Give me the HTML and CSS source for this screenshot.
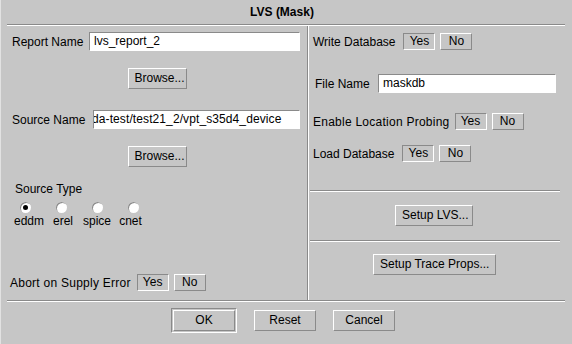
FILE: index.html
```html
<!DOCTYPE html>
<html lang="en">
<head>
  <meta charset="UTF-8" />
  <title>LVS (Mask)</title>
  <link rel="stylesheet" href="styles.css">
</head>
<body>
  <div class="dialog">
    <div class="title">LVS (Mask)</div>
    <div class="hsep"></div>

    <div class="main">
      <div class="left">
        <div class="row report-row">
          <span>Report Name</span>
          <div class="field report-field">lvs_report_2</div>
        </div>
        <div class="center browse-wrap"><button class="btn">Browse...</button></div>

        <div class="row source-row">
          <span>Source Name</span>
          <div class="field source-field"><span class="scrolled">da-test/test21_2/vpt_s35d4_device</span></div>
        </div>
        <div class="center browse-wrap"><button class="btn">Browse...</button></div>

        <div class="source-type">Source Type</div>
        <div class="radios">
          <div class="radio-item"><span class="radio on"></span><span>eddm</span></div>
          <div class="radio-item"><span class="radio"></span><span>erel</span></div>
          <div class="radio-item"><span class="radio"></span><span>spice</span></div>
          <div class="radio-item"><span class="radio"></span><span>cnet</span></div>
        </div>

        <div class="row abort-row">
          <span class="wide-label">Abort on Supply Error</span>
          <button class="btn toggle on">Yes</button>
          <button class="btn toggle">No</button>
        </div>
      </div>

      <div class="vsep"></div>

      <div class="right">
        <div class="row opt-row write-row">
          <span>Write Database</span>
          <button class="btn toggle on">Yes</button>
          <button class="btn toggle">No</button>
        </div>
        <div class="row file-row">
          <span>File Name</span>
          <div class="field file-field">maskdb</div>
        </div>
        <div class="row opt-row probe-row">
          <span class="wide-label">Enable Location Probing</span>
          <button class="btn toggle on">Yes</button>
          <button class="btn toggle">No</button>
        </div>
        <div class="row opt-row load-row">
          <span>Load Database</span>
          <button class="btn toggle on">Yes</button>
          <button class="btn toggle">No</button>
        </div>

        <div class="hsep sep-lvs"></div>
        <div class="center setup-lvs"><button class="btn">Setup LVS...</button></div>
        <div class="hsep sep-trace"></div>
        <div class="center setup-trace"><button class="btn">Setup Trace Props...</button></div>
      </div>
    </div>

    <div class="hsep"></div>
    <div class="footer">
      <div class="default"><button class="btn wide">OK</button></div>
      <button class="btn wide">Reset</button>
      <button class="btn wide">Cancel</button>
    </div>
  </div>
</body>
</html>
```

FILE: styles.css
```css
html, body {
  margin: 0;
  padding: 0;
  background: #c6c6c6;
  font-family: "Liberation Sans", Arial, sans-serif;
  font-size: 12px;
  color: #000;
}
.dialog {
  width: 572px;
  height: 344px;
  display: flex;
  flex-direction: column;
  overflow: hidden;
  box-shadow: inset 1px 0 #e2e2e2;
}
.title {
  height: 24px;
  line-height: 25px;
  text-align: center;
  font-weight: bold;
  padding-right: 8px;
}
.hsep {
  height: 0;
  border-top: 1px solid #8a8a8a;
  border-bottom: 1px solid #fff;
}
.dialog > .hsep {
  margin: 0 7px;
}
.main {
  display: flex;
  height: 274px;
  padding: 0 7px;
}
.left {
  width: 300px;
  display: flex;
  flex-direction: column;
}
.vsep {
  width: 0;
  border-left: 1px solid #8a8a8a;
  border-right: 1px solid #fff;
}
.right {
  flex: 1;
  display: flex;
  flex-direction: column;
}
.row {
  display: flex;
  align-items: center;
  gap: 5px;
  white-space: nowrap;
}
.center {
  display: flex;
  justify-content: center;
}
.wide-label {
  letter-spacing: 0.25px;
}

/* text fields */
.field {
  box-sizing: border-box;
  height: 19px;
  line-height: 17px;
  padding-left: 4px;
  background: #fff;
  border: 1px solid;
  border-color: #8a8a8a #fff #fff #8a8a8a;
  white-space: nowrap;
  overflow: hidden;
  margin-left: auto;
}
.scrolled {
  margin-left: -6px;
  letter-spacing: 0.1px;
}

/* buttons */
.btn {
  box-sizing: border-box;
  height: 21px;
  margin: 0;
  padding: 0 6px;
  font: inherit;
  color: #000;
  line-height: 19px;
  white-space: nowrap;
  background: #c6c6c6;
  border: 1px solid;
  border-color: #fff #8a8a8a #8a8a8a #fff;
  border-radius: 0;
}
.btn.on {
  border-color: #8a8a8a #fff #fff #8a8a8a;
}
.toggle {
  width: 32px;
  height: 17px;
  line-height: 15px;
  padding: 0;
}
.wide {
  width: 62px;
}
.default {
  padding: 1px;
  border: 1px solid;
  border-color: #8a8a8a #fff #fff #8a8a8a;
  display: flex;
}

/* left column */
.report-row {
  height: 19px;
  margin-top: 6px;
  padding: 0 7px 0 5px;
}
.report-field {
  width: 211px;
}
.browse-wrap {
  margin-top: 17px;
}
.browse-wrap .btn {
  width: 59px;
}
.source-row {
  height: 19px;
  margin-top: 21px;
  padding: 0 7px 0 5px;
}
.source-field {
  width: 207px;
}
.source-type {
  margin-top: 15px;
  line-height: 14px;
  padding-left: 8px;
}
.radios {
  display: grid;
  grid-template-columns: repeat(4, 36px);
  margin-top: 6px;
}
.radio-item {
  display: flex;
  flex-direction: column;
  align-items: center;
  gap: 1px;
  line-height: 14px;
}
.radio-item:first-child span:last-child {
  margin-left: 8px;
}
.radio-item:nth-child(2) span:last-child {
  margin-left: 4px;
}
.radio-item:nth-child(4) span:last-child {
  margin-right: 5px;
}
.radio {
  box-sizing: border-box;
  width: 11px;
  height: 11px;
  border-radius: 50%;
  background: #fff;
  box-shadow: inset 1px 1px #8a8a8a;
  display: flex;
  align-items: center;
  justify-content: center;
}
.radio.on::after {
  content: "";
  width: 5px;
  height: 5px;
  border-radius: 50%;
  background: #000;
}
.abort-row {
  height: 17px;
  margin-top: 46px;
  padding-left: 3px;
}
.abort-row .on {
  margin-left: 1px;
}

/* right column */
.opt-row {
  height: 17px;
  padding-left: 4px;
}
.write-row {
  margin-top: 7px;
}
.write-row .on,
.load-row .on {
  margin-left: 3px;
}
.file-row {
  height: 19px;
  margin-top: 24px;
  padding: 0 9px 0 6px;
}
.file-field {
  width: 178px;
}
.probe-row {
  margin-top: 20px;
}
.load-row {
  margin-top: 15px;
}
.right .hsep {
  margin-left: 1px;
  margin-right: 5px;
}
.sep-lvs {
  margin-top: 28px;
}
.setup-lvs {
  margin-top: 13px;
  padding-right: 6px;
}
.setup-lvs .btn {
  width: 78px;
}
.sep-trace {
  margin-top: 14px;
}
.setup-trace {
  margin-top: 12px;
  padding-right: 5px;
}
.setup-trace .btn {
  width: 123px;
}

/* bottom buttons */
.footer {
  display: flex;
  justify-content: center;
  align-items: center;
  gap: 17px;
  padding: 6px 6px 0 0;
}
```
